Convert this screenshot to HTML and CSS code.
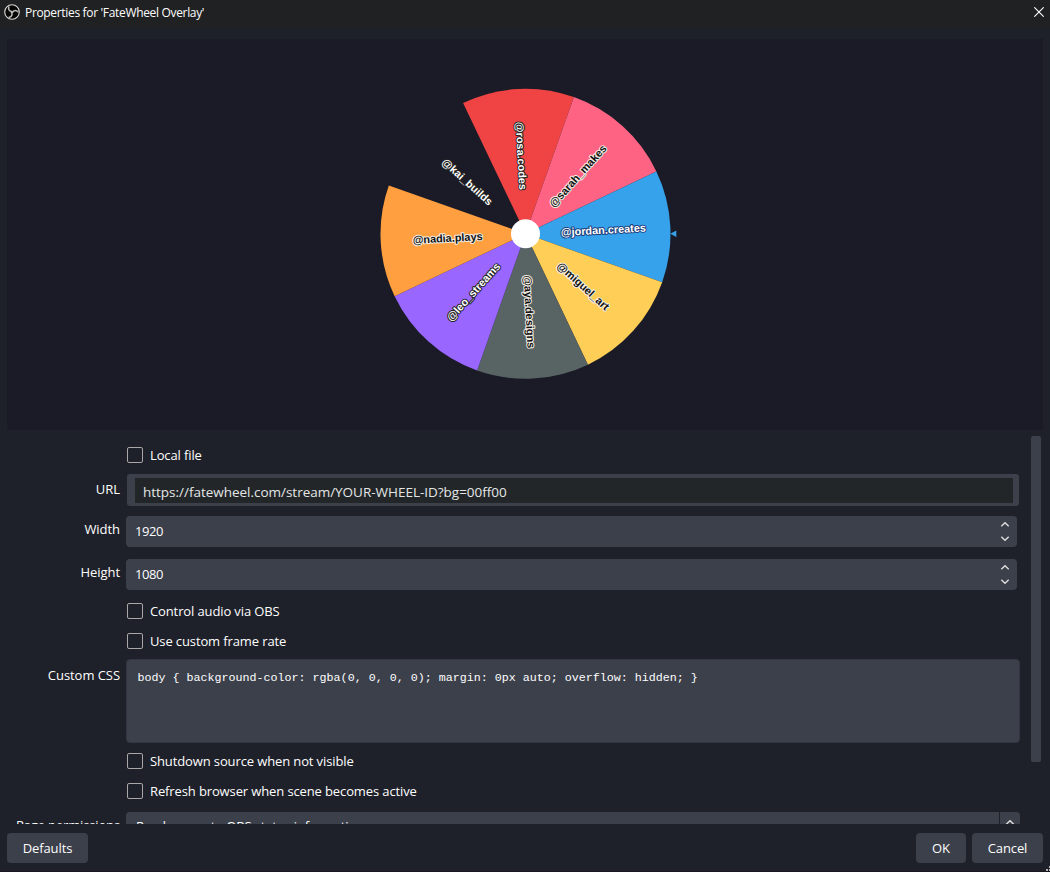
FILE: index.html
```
<!DOCTYPE html>
<html lang="en">
<head>
  <meta charset="UTF-8">
  <meta name="viewport" content="width=device-width, initial-scale=1.0">
  <title>Properties for 'FateWheel Overlay'</title>
  <link rel="stylesheet" href="styles.css">
</head>
<body>
  <div class="window">
    <header class="title-bar">
      <svg class="app-icon" width="16" height="16" viewBox="0 0 16 16">
        <circle cx="8" cy="8" r="7.3" fill="#050505" stroke="#dedcd4" stroke-width="1.1"/>
        <g fill="none" stroke="#bdbdb8" stroke-width="1.5" stroke-linecap="round">
          <path d="M4.8 3C4.1 5.4 5.3 7.4 8 7.4"/>
          <path d="M4.8 3C4.1 5.4 5.3 7.4 8 7.4" transform="rotate(120 8 8)"/>
          <path d="M4.8 3C4.1 5.4 5.3 7.4 8 7.4" transform="rotate(240 8 8)"/>
        </g>
      </svg>
      <span class="title">Properties for 'FateWheel Overlay'</span>
      <svg class="close" width="10" height="10" viewBox="0 0 10 10">
        <path d="M0.3 0.3L9.7 9.7M9.7 0.3L0.3 9.7" stroke="#fff" stroke-width="1.1"/>
      </svg>
    </header>

    <div class="preview">
      <svg class="wheel" width="302" height="300" viewBox="-150.5 -149.8 302 300">
        <!-- every slice is 45deg, centred on the x axis before rotation -->
        <defs>
          <path id="slice" d="M0 0L133.96 -55.49A145 145 0 0 1 133.96 55.49Z"/>
        </defs>
        <use href="#slice" fill="#f04444" transform="rotate(-93)"/>
        <use href="#slice" fill="#ff6384" transform="rotate(-48)"/>
        <use href="#slice" fill="#36a2eb" transform="rotate(-3)"/>
        <use href="#slice" fill="#ffce56" transform="rotate(42)"/>
        <use href="#slice" fill="#586464" transform="rotate(87)"/>
        <use href="#slice" fill="#9966ff" transform="rotate(132)"/>
        <use href="#slice" fill="#ff9f40" transform="rotate(177)"/>
        <circle r="14.5" fill="#fff"/>
        <path d="M144.8 0L150.8 -3.3V3.3Z" fill="#36a2eb"/>
        <g class="names">
          <text class="light" x="-78" y="4" transform="rotate(87)">@rosa.codes</text>
          <text class="dark" x="78" y="4" transform="rotate(-48)">@sarah_makes</text>
          <text class="light blue" x="78" y="4" transform="rotate(-3)">@jordan.creates</text>
          <text class="dark" x="78" y="4" transform="rotate(42)">@miguel_art</text>
          <text class="dark" x="78" y="4" transform="rotate(87)">@aya.designs</text>
          <text class="light" x="-78" y="4" transform="rotate(-48)">@leo_streams</text>
          <text class="dark" x="-78" y="4" transform="rotate(-3)">@nadia.plays</text>
          <text class="light" x="-78" y="4" transform="rotate(42)">@kai_builds</text>
        </g>
      </svg>
    </div>

    <div class="content">
      <form class="form">
        <label class="check first"><span class="box"></span>Local file</label>
        <div class="row row-url">
          <span class="label">URL</span>
          <div class="url"><div class="url-inner">https://fatewheel.com/stream/YOUR-WHEEL-ID?bg=00ff00</div></div>
        </div>
        <div class="row row-spin">
          <span class="label">Width</span>
          <div class="spin">
            <span>1920</span>
            <svg width="10" height="22" viewBox="0 0 10 22"><path d="M1.3 5.2L5 1.8L8.7 5.2M1.3 15.8L5 19.2L8.7 15.8"/></svg>
          </div>
        </div>
        <div class="row row-spin">
          <span class="label">Height</span>
          <div class="spin">
            <span>1080</span>
            <svg width="10" height="22" viewBox="0 0 10 22"><path d="M1.3 5.2L5 1.8L8.7 5.2M1.3 15.8L5 19.2L8.7 15.8"/></svg>
          </div>
        </div>
        <label class="check"><span class="box"></span>Control audio via OBS</label>
        <label class="check"><span class="box"></span>Use custom frame rate</label>
        <div class="row row-css">
          <span class="label">Custom CSS</span>
          <div class="css-text">body { background-color: rgba(0, 0, 0, 0); margin: 0px auto; overflow: hidden; }</div>
        </div>
        <label class="check"><span class="box"></span>Shutdown source when not visible</label>
        <label class="check"><span class="box"></span>Refresh browser when scene becomes active</label>
        <div class="row row-combo">
          <span class="label">Page permissions</span>
          <div class="combo">
            <span class="combo-text">Read access to OBS status information</span>
            <span class="combo-arrow">
              <svg width="10" height="22" viewBox="0 0 10 22"><path d="M1.3 5.2L5 1.8L8.7 5.2M1.3 15.8L5 19.2L8.7 15.8"/></svg>
            </span>
          </div>
        </div>
      </form>
      <div class="scrollbar"></div>
    </div>

    <footer class="buttons">
      <button class="btn defaults">Defaults</button>
      <button class="btn ok">OK</button>
      <button class="btn cancel">Cancel</button>
    </footer>
    <svg class="grip" width="4" height="5" viewBox="0 0 4 5">
      <path d="M3 0h1v2h-1zM0 3h2v2h-2zM3 3h1v2h-1z" fill="#b4b4b4"/>
    </svg>
  </div>
</body>
</html>
```
FILE: styles.css
```
* {
  margin: 0;
  padding: 0;
  box-sizing: border-box;
}

body {
  width: 1050px;
  height: 872px;
  overflow: hidden;
  background-color: #1f212a;
  color: #fefefe;
  font-family: "Open Sans", "Noto Sans", sans-serif;
  font-size: 13px;
}

.window {
  position: relative;
  display: flex;
  flex-direction: column;
  height: 872px;
  border-bottom: 1px solid #1a171f;
}

.title-bar {
  display: flex;
  align-items: center;
  height: 28px;
  padding: 0 6px 4px 4px;
  background-color: #202122;
}

.title {
  margin: 2px 0 0 5px;
  font-size: 12px;
  letter-spacing: -0.33px;
  line-height: 20px;
}

.close {
  margin-left: auto;
}

.preview {
  height: 391px;
  margin: 11px 7px 0;
  padding: 45px 0 0 368px;
  background-color: #1a1b26;
}

.wheel {
  display: block;
}

.names text {
  font-family: "Liberation Sans", Arial, sans-serif;
  font-size: 10.9px;
  font-weight: bold;
  text-anchor: middle;
  paint-order: stroke;
  stroke-width: 2px;
  stroke-linejoin: round;
}

.names .light {
  fill: #fff;
  stroke: #222;
}

.names .blue {
  stroke: #1d3f7c;
}

.names .dark {
  fill: #111;
  stroke: #f4efe6;
}

.content {
  display: flex;
  height: 388px;
  margin-top: 6px;
  overflow: hidden;
}

.form {
  width: 1020px;
}

.scrollbar {
  width: 10px;
  height: 326px;
  margin-left: 11px;
  border-radius: 2px;
  background-color: #3c404b;
}

.check {
  display: flex;
  align-items: center;
  height: 30px;
  padding-left: 127px;
  letter-spacing: -0.12px;
}

.check.first {
  height: 38px;
}

.box {
  width: 16px;
  height: 16px;
  margin-right: 7px;
  border: 1px solid #a9a7a8;
  border-radius: 2px;
}

.row {
  display: flex;
  align-items: flex-start;
}

.label {
  width: 120px;
  margin-right: 6px;
  letter-spacing: -0.05px;
  line-height: 18px;
  text-align: right;
  white-space: nowrap;
}

.row-url {
  height: 42px;
}

.row-url .label {
  margin-top: 6px;
}

.url {
  width: 892px;
  height: 32px;
  margin-left: 1px;
  padding: 4px 6px 3px 8px;
  border-radius: 3px;
  background-color: #3c404b;
}

.url-inner {
  height: 25px;
  padding-left: 8px;
  background-color: #232629;
  color: #e4e6e6;
  font-size: 13.5px;
  letter-spacing: -0.02px;
  line-height: 28px;
}

.row-spin {
  height: 43px;
}

.row-spin + .check {
  margin-top: -6px;
}

.row-spin .label {
  margin-top: 4px;
}

.spin {
  display: flex;
  justify-content: space-between;
  width: 891px;
  height: 31px;
  padding: 5px 7px 0 9px;
  border-radius: 4px;
  background-color: #3c404b;
  letter-spacing: -0.4px;
  line-height: 21px;
}

.spin svg path,
.combo-arrow svg path {
  fill: none;
  stroke: #dfdfdc;
  stroke-width: 1.4;
}

.row-css {
  height: 90px;
  padding-top: 3px;
}

.row-css .label {
  margin-top: 7px;
}

.css-text {
  width: 894px;
  height: 84px;
  padding: 11px 10.5px;
  border: 1px solid #343743;
  border-radius: 4px;
  background-color: #3c404b;
  font-family: "Liberation Mono", "Courier New", monospace;
  font-size: 11.68px;
  line-height: 14px;
}

.row-combo {
  padding-top: 6px;
}

.row-combo .label {
  margin-top: 4px;
  letter-spacing: -0.15px;
}

.combo {
  display: flex;
  width: 894px;
  height: 31px;
  border-radius: 4px;
  background-color: #3c404b;
}

.combo-text {
  flex: 1;
  padding-left: 10px;
  letter-spacing: -0.15px;
  line-height: 28px;
}

.combo-arrow {
  width: 21px;
  padding: 7px 0 0 5px;
  border-left: 1px solid #1f212a;
}

.buttons {
  display: flex;
  gap: 6px;
  padding: 9px 7px 0;
}

.btn {
  height: 30px;
  border: none;
  border-radius: 4px;
  background-color: #3c404b;
  color: #fefefe;
  font-family: inherit;
  font-size: 13px;
  letter-spacing: -0.1px;
}

.defaults {
  width: 81px;
  margin-right: auto;
}

.ok {
  width: 50px;
}

.cancel {
  width: 71px;
}

.grip {
  position: absolute;
  right: 0;
  bottom: 0;
}
```
